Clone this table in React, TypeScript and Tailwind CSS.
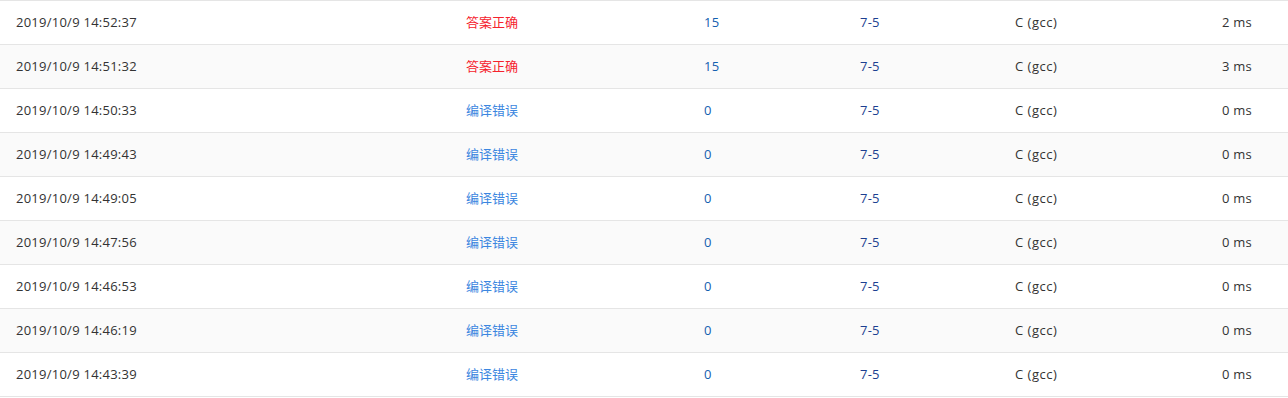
const rows = [
  { time: '2019/10/9 14:52:37', ok: true, score: 15, ms: 2 },
  { time: '2019/10/9 14:51:32', ok: true, score: 15, ms: 3 },
  { time: '2019/10/9 14:50:33', ok: false, score: 0, ms: 0 },
  { time: '2019/10/9 14:49:43', ok: false, score: 0, ms: 0 },
  { time: '2019/10/9 14:49:05', ok: false, score: 0, ms: 0 },
  { time: '2019/10/9 14:47:56', ok: false, score: 0, ms: 0 },
  { time: '2019/10/9 14:46:53', ok: false, score: 0, ms: 0 },
  { time: '2019/10/9 14:46:19', ok: false, score: 0, ms: 0 },
  { time: '2019/10/9 14:43:39', ok: false, score: 0, ms: 0 },
];

const App = () => {
  return (
    <div
      className="w-[1288px] h-[398px] bg-white text-[13px] text-[#333] overflow-hidden"
      style={{ fontFamily: '"Open Sans", "Noto Sans CJK SC", sans-serif' }}
    >
      <div className="border-b border-[#e5e5e5]">
        {rows.map((row, i) => (
          <div
            key={i}
            className={`grid grid-cols-[450px_238px_156px_155px_207px_82px] h-[44px] items-center border-t border-[#e5e5e5] tracking-[0.25px] ${
              i % 2 === 1 ? 'bg-[#fafafa]' : 'bg-white'
            }`}
          >
            <div className="pl-4">{row.time}</div>
            <div className="pl-4 tracking-normal">
              {row.ok ? (
                <span className="text-[#f5222d]">答案正确</span>
              ) : (
                <span className="text-[#3b86e0]">编译错误</span>
              )}
            </div>
            <div className="pl-4 text-[#1460b0]">{row.score}</div>
            <div className="pl-4 text-[#1d3f91]">7-5</div>
            <div className="pl-4 tracking-[0.5px]">C (gcc)</div>
            <div className="pl-4">{row.ms} ms</div>
          </div>
        ))}
      </div>
    </div>
  );
};

export default App;
